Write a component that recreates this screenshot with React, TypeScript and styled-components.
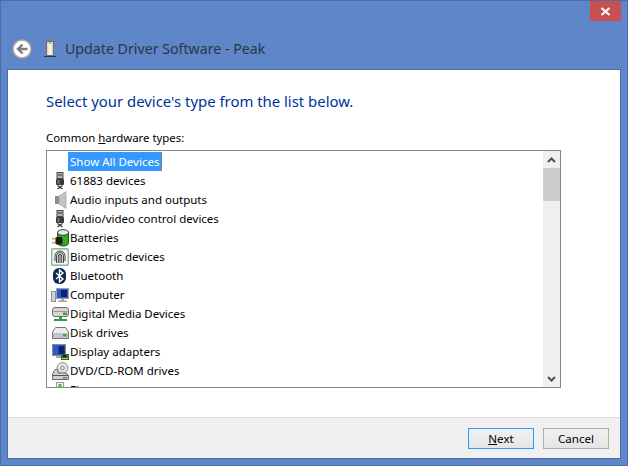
import React from 'react';
import styled, { createGlobalStyle } from 'styled-components';

const UI_FONT = '"Noto Sans", "Open Sans", sans-serif';

const Global = createGlobalStyle`
  html, body { margin: 0; padding: 0; background: #5e86c9; }
  * { box-sizing: border-box; }
`;

const UsbIcon = () => (
  <svg width="18" height="18" viewBox="0 0 18 18">
    <rect x="6" y=".5" width="6" height="6" fill="#b4b4b4" stroke="#4a4a4a" />
    <rect x="7.500" y="2" width="1" height="2" fill="#333" />
    <rect x="9.500" y="2" width="1" height="2" fill="#333" />
    <rect x="5" y="7" width="8" height="6" rx="1" fill="#3a3a3a" />
    <rect x="6.500" y="8" width="2" height="4" fill="#777" />
    <path d="M6.500 13.500 11.500 17M11.500 13.500 6.500 17" stroke="#333" strokeWidth="1.300" fill="none" />
  </svg>
);

const SpeakerIcon = () => (
  <svg width="18" height="18" viewBox="0 0 18 18">
    <rect x="4" y="5" width="4" height="8" fill="#8b8b8b" />
    <path d="M8 5l7-4.500v17L8 13z" fill="#c4c4c4" stroke="#a0a0a0" strokeWidth=".7" />
  </svg>
);

const BatteryIcon = () => (
  <svg width="18" height="18" viewBox="0 0 18 18">
    <path d="M6.500 3v11c0 1.800 2.500 3 5.500 3s5.500-1.200 5.500-3V3z" fill="#36a62f" stroke="#1f5a1f" />
    <ellipse cx="12" cy="3.500" rx="5.500" ry="2.800" fill="#e4f2e0" stroke="#3c3c3c" />
    <path d="M1 9.700h5M1 13.700h5" stroke="#d7b53a" strokeWidth="1.800" />
    <rect x="4.500" y="8" width="7" height="7.500" rx="1.500" fill="#1c1c1c" />
  </svg>
);

const BiometricIcon = () => (
  <svg width="18" height="18" viewBox="0 0 18 18">
    <rect x=".7" y=".7" width="16.600" height="16.600" rx="1" fill="#f2f5f2" stroke="#8fb3a4" strokeWidth="1.400" />
    <g fill="none" stroke="#2e2e2e" strokeWidth=".9">
      <path d="M4 13V8a5 5 0 0 1 10 0v5" />
      <path d="M5.500 15V8a3.500 3.500 0 0 1 7 0v7" />
      <path d="M7.300 15V8a1.700 1.700 0 0 1 3.400 0v7" />
      <path d="M9 7v8" />
    </g>
  </svg>
);

const BluetoothIcon = () => (
  <svg width="18" height="18" viewBox="0 0 18 18">
    <rect x="2" y="1" width="13" height="16" rx="6" fill="#10294f" />
    <path d="M5 6l7 6-3.500 3V3L12 6l-7 6" fill="none" stroke="#fff" strokeWidth="1.400" />
  </svg>
);

const ComputerIcon = () => (
  <svg width="18" height="18" viewBox="0 0 18 18">
    <rect x=".5" y="5.500" width="4" height="10" fill="#d4d4d4" stroke="#8e8e8e" />
    <rect x="5.500" y="2.500" width="12" height="10" fill="#2a5ac8" stroke="#a0a0a0" />
    <rect x="10" y="4" width="6" height="7" fill="#0e2170" />
    <path d="M10 13h3v1.500h3V16H7v-1.500h3z" fill="#a8a8a8" />
  </svg>
);

const MediaIcon = () => (
  <svg width="18" height="18" viewBox="0 0 18 18">
    <rect x="1.500" y="2.500" width="16" height="9" rx="2.500" fill="#d6d6d6" stroke="#6e6e6e" />
    <rect x="2.500" y="6" width="14" height="1" fill="#9a9a9a" />
    <rect x="12" y="7.500" width="4" height="2.500" fill="#38a12e" />
    <path d="M8 12h3v2h5v2H3v-2h5z" fill="#2f9e3c" />
  </svg>
);

const DiskIcon = () => (
  <svg width="18" height="18" viewBox="0 0 18 18">
    <path d="M4.500 3.500h10l3 4.500v6.500h-16V8z" fill="#ececec" stroke="#777" />
    <rect x="2" y="9" width="15" height="5" fill="#c2c6cb" />
    <rect x="12" y="10" width="3.500" height="2.500" fill="#48a92e" />
  </svg>
);

const DisplayIcon = () => (
  <svg width="18" height="18" viewBox="0 0 18 18">
    <rect x="1.500" y="1.500" width="13" height="11" fill="#2b5cc9" stroke="#8d8d8d" />
    <rect x="7.500" y="3" width="6" height="8" fill="#0e2271" />
    <rect x="5" y="13" width="5" height="2" fill="#a8a8a8" />
    <rect x="10" y="11" width="8" height="6" fill="#2f6e3e" />
    <path d="M11 15.500h6" stroke="#d3b33c" />
    <rect x="12" y="12" width="3" height="2" fill="#151515" />
  </svg>
);

const DvdIcon = () => (
  <svg width="18" height="18" viewBox="0 0 18 18">
    <circle cx="11.500" cy="6" r="5.500" fill="#e2e2e8" stroke="#8f8f8f" />
    <circle cx="11.500" cy="6" r="1.700" fill="#fff" stroke="#777" />
    <path d="M4 7.500h3V11h8l2.500 2v4.500h-16V12z" fill="#cfcfcf" stroke="#6c6c6c" />
    <rect x="2" y="13" width="15" height="1" fill="#555" />
    <rect x="12" y="15" width="4" height="1.500" fill="#3aa12e" />
  </svg>
);

const PortIcon = () => (
  <svg width="18" height="18" viewBox="0 0 18 18">
    <rect x="5.500" y="1.500" width="7" height="14" fill="#eef2ea" stroke="#9aa394" />
    <rect x="7.500" y="3" width="3" height="3" fill="#54b64a" />
  </svg>
);

const PeakIcon = () => (
  <svg width="16" height="18" viewBox="0 0 16 18">
    <rect x="4.500" y="1.500" width="7" height="14" fill="#ddd8c4" stroke="#6f7058" />
    <rect x="6.500" y="3" width="3" height="12" fill="#f6f4e6" />
    <rect x="7" y="2" width="2" height="2" fill="#7fdc5a" />
    <rect x="2" y="16" width="12" height="1" fill="#2c3550" />
  </svg>
);

const BackIcon = () => (
  <svg width="20" height="20" viewBox="0 0 20 20">
    <circle cx="10" cy="10" r="9" fill="#fff" stroke="#a8a8a8" strokeWidth="1.500" />
    <path d="M15.500 10H6.500M10.500 5.500 6 10l4.500 4.500" fill="none" stroke="#7c7c7c" strokeWidth="2.400" />
  </svg>
);

const devices: { label: string; icon?: React.ReactNode }[] = [
  { label: 'Show All Devices' },
  { label: '61883 devices', icon: <UsbIcon /> },
  { label: 'Audio inputs and outputs', icon: <SpeakerIcon /> },
  { label: 'Audio/video control devices', icon: <UsbIcon /> },
  { label: 'Batteries', icon: <BatteryIcon /> },
  { label: 'Biometric devices', icon: <BiometricIcon /> },
  { label: 'Bluetooth', icon: <BluetoothIcon /> },
  { label: 'Computer', icon: <ComputerIcon /> },
  { label: 'Digital Media Devices', icon: <MediaIcon /> },
  { label: 'Disk drives', icon: <DiskIcon /> },
  { label: 'Display adapters', icon: <DisplayIcon /> },
  { label: 'DVD/CD-ROM drives', icon: <DvdIcon /> },
  // clipped by the list edge in the screenshot, so this label is a guess
  { label: 'Firmware', icon: <PortIcon /> },
];

export default function App() {
  return (
    <Window>
      <Global />
      <CloseRow>
        <CloseButton>
          <svg width="11" height="9" viewBox="0 0 11 9">
            <path d="M1.500 1 9.500 8M9.500 1 1.500 8" stroke="#fff" strokeWidth="2.200" />
          </svg>
        </CloseButton>
      </CloseRow>
      <TitleRow>
        <BackIcon />
        <PeakIcon />
        <Title>Update Driver Software - Peak</Title>
      </TitleRow>
      <Panel>
        <Content>
          <Heading>Select your device's type from the list below.</Heading>
          <ListLabel>Common <u>h</u>ardware types:</ListLabel>
          <ListBox>
            <List>
              {devices.map((d, i) => (
                <Row key={d.label}>
                  <IconCell>{d.icon}</IconCell>
                  <RowText $selected={i === 0}>{d.label}</RowText>
                </Row>
              ))}
            </List>
            <Scrollbar>
              <ScrollButton>
                <svg width="9" height="6" viewBox="0 0 9 6">
                  <path d="M1 5 4.500 1.500 8 5" fill="none" stroke="#505050" strokeWidth="2" />
                </svg>
              </ScrollButton>
              <Thumb />
              <ScrollTrack />
              <ScrollButton>
                <svg width="9" height="6" viewBox="0 0 9 6">
                  <path d="M1 1 4.500 4.500 8 1" fill="none" stroke="#505050" strokeWidth="2" />
                </svg>
              </ScrollButton>
            </Scrollbar>
          </ListBox>
        </Content>
        <Footer>
          <Button $primary><u>N</u>ext</Button>
          <Button>Cancel</Button>
        </Footer>
      </Panel>
    </Window>
  );
}

const Window = styled.div`
  width: 628px;
  height: 466px;
  display: flex;
  flex-direction: column;
  background: #5e86c9;
  border: 1px solid #4a6ea8;
  padding: 0 7px 7px;
  font-family: ${UI_FONT};
  overflow: hidden;
`;

const CloseRow = styled.div`
  height: 21px;
  display: flex;
  justify-content: flex-end;
`;

const CloseButton = styled.div`
  width: 31px;
  height: 20px;
  margin-right: -1px;
  background: #c75050;
  display: flex;
  align-items: center;
  justify-content: center;
`;

const TitleRow = styled.div`
  height: 48px;
  display: flex;
  align-items: center;
  gap: 10px;
  padding: 5px 0 0 4px;
`;

const Title = styled.div`
  font-size: 14.2px;
  color: #2b3648;
  margin-left: -3px;
`;

const Panel = styled.div`
  flex: 1;
  display: flex;
  flex-direction: column;
  background: #fff;
  outline: 1px solid #4a6ea8;
`;

const Content = styled.div`
  flex: 1;
  padding: 21px 38px 0;
`;

const Heading = styled.div`
  font-size: 14.9px;
  line-height: 20px;
  color: #003399;
`;

const ListLabel = styled.div`
  margin-top: 19px;
  font-size: 11.4px;
  line-height: 16px;
  color: #000;
`;

const ListBox = styled.div`
  margin-top: 4px;
  width: 515px;
  height: 238px;
  border: 1px solid #82878f;
  display: flex;
  overflow: hidden;
`;

const List = styled.div`
  flex: 1;
  padding-top: 1px;
  overflow: hidden;
`;

const Row = styled.div`
  height: 19px;
  flex-shrink: 0;
  display: flex;
  align-items: center;
  padding-left: 4px;
`;

const IconCell = styled.div`
  width: 18px;
  height: 18px;
  display: flex;
  align-items: center;
  justify-content: center;
`;

const RowText = styled.span<{ $selected?: boolean }>`
  font-size: 11.5px;
  line-height: 19px;
  margin-left: -1px;
  padding: 0 2px;
  color: ${p => (p.$selected ? '#fff' : '#000')};
  background: ${p => (p.$selected ? '#3399ff' : 'transparent')};
  border-right: ${p => (p.$selected ? '1px dotted #c8761e' : 'none')};
`;

const Scrollbar = styled.div`
  width: 17px;
  display: flex;
  flex-direction: column;
  background: #f0f0f0;
`;

const ScrollButton = styled.div`
  height: 17px;
  display: flex;
  align-items: center;
  justify-content: center;
`;

const Thumb = styled.div`
  height: 33px;
  background: #cdcdcd;
`;

const ScrollTrack = styled.div`
  flex: 1;
`;

const Footer = styled.div`
  height: 41px;
  background: #f0f0f0;
  border-top: 1px solid #dfdfdf;
  display: flex;
  justify-content: flex-end;
  align-items: center;
  gap: 9px;
  padding-right: 11px;
`;

const Button = styled.div<{ $primary?: boolean }>`
  width: 66px;
  height: 21px;
  display: flex;
  align-items: center;
  justify-content: center;
  font-size: 11.6px;
  color: #000;
  background: linear-gradient(#f0f0f0, #e5e5e5);
  border: 1px solid ${p => (p.$primary ? '#3399ff' : '#acacac')};
`;
